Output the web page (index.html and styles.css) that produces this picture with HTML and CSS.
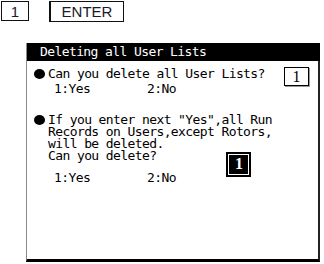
FILE: index.html
```html
<!DOCTYPE html>
<html>
<head>
<meta charset="utf-8">
<link rel="stylesheet" href="styles.css">
</head>
<body>
<div class="keys">
  <div class="key key-num">1</div>
  <div class="key key-enter">ENTER</div>
</div>
<div class="dialog">
  <div class="title">Deleting all User Lists</div>
  <div class="para para-first">
    <span class="bullet"></span>
    <div class="text">
      <div class="line">Can you delete all User Lists?</div>
      <div class="options opt-first"><span class="opt-yes">1:Yes</span><span>2:No</span></div>
    </div>
    <div class="input-box">1</div>
  </div>
  <div class="para para-second">
    <span class="bullet"></span>
    <div class="text">
      <div class="line">If you enter next "Yes",all Run</div>
      <div class="line">Records on Users,except Rotors,</div>
      <div class="line">will be deleted.</div>
      <div class="line ask-row"><span>Can you delete?</span><span class="cursor-box"><span class="cursor-fill">1</span></span></div>
      <div class="options"><span class="opt-yes">1:Yes</span><span>2:No</span></div>
    </div>
  </div>
</div>
</body>
</html>
```
FILE: styles.css
```css
html, body {
  margin: 0;
  padding: 0;
  background: #fff;
}
body {
  width: 324px;
  height: 264px;
  overflow: hidden;
  font-family: "DejaVu Sans Mono", "Liberation Mono", monospace;
  font-size: 13px;
  letter-spacing: -0.6px;
  color: #000;
}
.keys {
  display: flex;
  align-items: flex-start;
  gap: 20px;
  padding: 1px 0 0 1px;
  letter-spacing: 0;
}
.key {
  box-sizing: border-box;
  border: 1px solid #111;
  font-family: "Liberation Sans", Arial, sans-serif;
  font-size: 15px;
  color: #1a1a2a;
  display: flex;
  align-items: center;
  justify-content: center;
}
.key-num {
  width: 28px;
  height: 20px;
}
.key-enter {
  width: 75px;
  height: 21px;
  border-left-width: 2px;
}
.dialog {
  box-sizing: border-box;
  margin: 21px 0 0 26px;
  width: 294px;
  height: 219px;
  border-left: 1px solid #8a8a8a;
  border-right: 2px solid #222;
  border-bottom: 3px solid #000;
}
.title {
  height: 18px;
  line-height: 18px;
  background: #000;
  color: #fff;
  padding-left: 13px;
  margin-right: -2px;
  white-space: pre;
}
.para {
  display: flex;
  align-items: flex-start;
  padding-left: 6px;
  line-height: 12px;
}
.line, .options {
  white-space: pre;
  height: 12px;
}
.para-first {
  margin-top: 7px;
}
.para-second {
  margin-top: 19px;
}
.bullet {
  flex: none;
  width: 15px;
  height: 12px;
  position: relative;
}
.bullet::before {
  content: "";
  position: absolute;
  left: 1px;
  top: 1px;
  width: 11px;
  height: 10px;
  border-radius: 50%;
  background: #000;
}
.options {
  display: flex;
  padding-left: 6px;
  margin-top: 3px;
}
.para-second .options {
  margin-top: 0;
}
.opt-yes {
  width: 93px;
}
.input-box {
  box-sizing: border-box;
  margin: -1px 9px 0 auto;
  width: 25px;
  height: 19px;
  border: 1px solid #000;
  box-shadow: 1px 1px 0 #999;
  font-family: "Liberation Serif", "Times New Roman", serif;
  font-size: 16px;
  letter-spacing: 0;
  line-height: 17px;
  text-align: center;
}
.ask-row {
  display: flex;
  align-items: flex-start;
  height: 22px;
}
.cursor-box {
  box-sizing: border-box;
  margin: 2px 0 0 70px;
  width: 25px;
  height: 25px;
  border: 2px solid #000;
  padding: 1px;
  display: flex;
}
.cursor-fill {
  flex: 1;
  background: #000;
  color: #fff;
  font-family: "Liberation Serif", "Times New Roman", serif;
  font-weight: bold;
  font-size: 16px;
  letter-spacing: 0;
  line-height: 17px;
  text-align: center;
}
```
